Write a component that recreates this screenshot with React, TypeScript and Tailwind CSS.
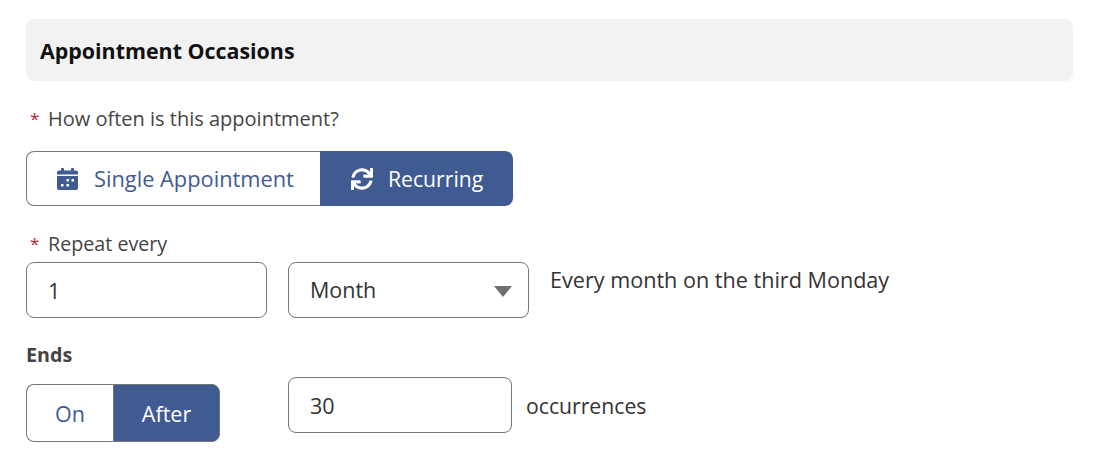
import { FaSync } from 'react-icons/fa'

function CalendarIcon() {
  return (
    <svg viewBox="0 0 21 22" className="w-[21px] h-[22px]" fill="#3f5b92">
      <rect x="4" y="0" width="3" height="4" rx="1" />
      <rect x="14" y="0" width="3" height="4" rx="1" />
      <path d="M2 2.500h17a2 2 0 0 1 2 2v2H0v-2a2 2 0 0 1 2-2z" />
      <path
        fillRule="evenodd"
        d="M0 8h21v12a2 2 0 0 1-2 2H2a2 2 0 0 1-2-2V8zm9.500 3v2.500h2.500V11H9.500zm5 0v2.500h2.500V11H14.500zM4 16v2.500h2.500V16H4zm5.500 0v2.500h2.500V16H9.500z"
      />
    </svg>
  )
}

function FieldLabel({ children, wide }: { children: string; wide?: boolean }) {
  return (
    <label className={`flex items-center leading-6 text-[#444444] ${wide ? 'text-[20px]' : 'text-[19.7px]'}`}>
      <span className="w-[22px] pl-[4px] text-[#b3262e] text-[17px]">*</span>
      {children}
    </label>
  )
}

export default function App() {
  return (
    <div className="w-[1100px] h-[464px] bg-white overflow-hidden px-[26px] pt-[19px] font-['Open_Sans','Noto_Sans',sans-serif]">
      <div className="w-[1047px] h-[62px] bg-[#f2f2f2] rounded-lg flex items-center px-[14px]">
        <h2 className="text-[21.4px] font-bold text-[#111111] pt-[2px]">Appointment Occasions</h2>
      </div>

      <div className="mt-[26px]">
        <FieldLabel wide>How often is this appointment?</FieldLabel>
      </div>

      <div className="mt-[20px] flex w-[487px] h-[55px]">
        <button className="w-[294px] flex items-center pl-[30px] gap-[16px] border border-r-0 border-[#767676] rounded-l-lg bg-white text-[#3f5b92] text-[21.8px]">
          <CalendarIcon />
          <span className="pt-[1px]">Single Appointment</span>
        </button>
        <button className="flex-1 flex items-center pl-[31px] gap-[15px] rounded-r-lg bg-[#3f5b92] text-white text-[21.2px]">
          <FaSync className="w-[22px] h-[22px]" />
          Recurring
        </button>
      </div>

      <div className="mt-[26px]">
        <FieldLabel>Repeat every</FieldLabel>
      </div>

      <div className="mt-[6px] flex items-start">
        <input
          readOnly
          value="1"
          className="w-[241px] h-[56px] px-[21px] border border-[#767676] rounded-lg text-[21.5px] text-[#333333] outline-none"
        />
        <div className="ml-[21px] w-[241px] h-[56px] pl-[21px] pr-[16px] border border-[#767676] rounded-lg flex items-center justify-between text-[21.5px] text-[#333333]">
          Month
          <span className="w-0 h-0 border-x-[9px] border-x-transparent border-t-[11px] border-t-[#707070] mt-[3px]" />
        </div>
        <span className="ml-[21px] mt-[3px] text-[21.6px] leading-[30px] text-[#333333]">Every month on the third Monday</span>
      </div>

      <div className="mt-[25px] text-[19.7px] leading-6 font-bold text-[#444444]">Ends</div>

      <div className="mt-[10px] flex items-start">
        <div className="mt-[7px] flex w-[194px] h-[58px] text-[21.5px]">
          <button className="w-[87px] pt-[2px] border border-r-0 border-[#767676] rounded-l-lg bg-white text-[#3f5b92]">On</button>
          <button className="flex-1 pt-[2px] border border-[#767676] rounded-r-lg bg-[#3f5b92] text-white">After</button>
        </div>
        <input
          readOnly
          value="30"
          className="ml-[68px] w-[224px] h-[56px] px-[21px] border border-[#767676] rounded-lg text-[21.5px] text-[#333333] outline-none"
        />
        <span className="ml-[14px] mt-[14px] text-[21.2px] leading-[30px] text-[#333333]">occurrences</span>
      </div>
    </div>
  )
}
